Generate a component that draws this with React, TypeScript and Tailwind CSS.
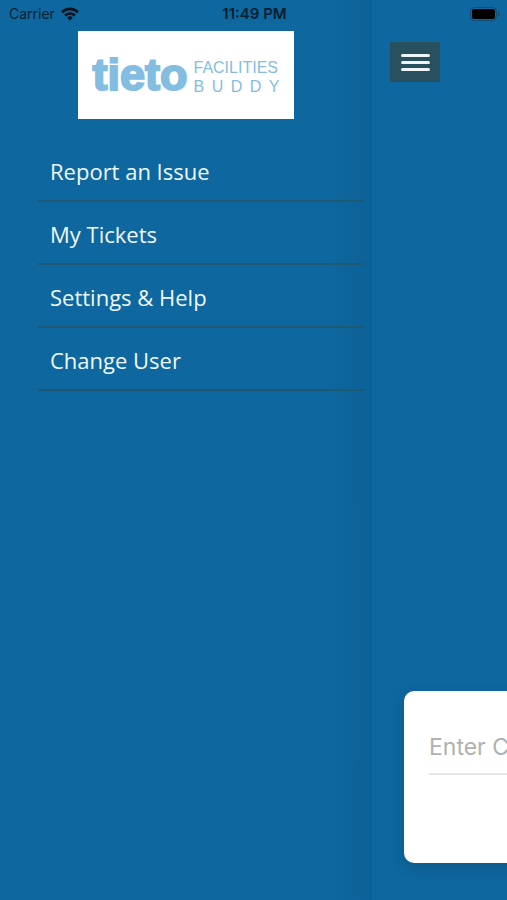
const menuItems = [
  { label: "Report an Issue", href: "#report" },
  { label: "My Tickets", href: "#tickets" },
  { label: "Settings & Help", href: "#settings" },
  { label: "Change User", href: "#user" },
];

const StatusBar = () => {
  return (
    <header className="absolute inset-x-0 top-0 grid h-7 grid-cols-3 items-center pr-[7px] pl-[9px] font-['Inter',sans-serif] text-[14px] leading-7 text-[#06202f]">
      <div className="flex items-center gap-1.5">
        <span>Carrier</span>
        <svg width="18" height="14" viewBox="0 0 18 14" fill="none" stroke="#04121b" strokeWidth="2.6">
          <path d="M1 5.2a11.4 11.4 0 0 1 16 0" />
          <path d="M4.1 8.5a7 7 0 0 1 9.8 0" />
          <path d="M9 13.5 6.2 10.7a4 4 0 0 1 5.6 0Z" fill="#04121b" stroke="none" />
        </svg>
      </div>
      <span className="text-center text-[15px] font-semibold">11:49 PM</span>
      <svg className="justify-self-end" width="30" height="14" viewBox="0 0 30 14">
        <rect x="0.5" y="0.5" width="26" height="13" rx="4" fill="none" stroke="#0a4d77" />
        <rect x="2" y="2" width="23" height="10" rx="2" fill="#000" />
        <path d="M28 4.8c2 .8 2 3.6 0 4.4Z" fill="#0a4d77" />
      </svg>
    </header>
  );
};

const Logo = () => {
  return (
    <div className="mx-auto flex h-[88px] w-[216px] items-center justify-center gap-1.5 bg-white font-['Liberation_Sans',sans-serif] text-[#84bde2]">
      <span className="text-[45px] leading-[44px] font-bold [-webkit-text-stroke:2px_#84bde2]">
        tieto
      </span>
      <div className="w-[86px] pt-1 text-[16px] leading-[19px]">
        <div>FACILITIES</div>
        <div className="flex justify-between">
          {"BUDDY".split("").map((letter, i) => (
            <span key={i}>{letter}</span>
          ))}
        </div>
      </div>
    </div>
  );
};

const Drawer = () => {
  return (
    <aside className="w-[372px] shrink-0 bg-linear-to-r from-[#0e679f] from-88% to-[#0d6297] pt-[31px]">
      <Logo />
      <nav className="mt-5 mr-2 ml-[38px]">
        <ul>
          {menuItems.map((item) => (
            <li key={item.label} className="border-b-2 border-[#1f5873]">
              <a
                href={item.href}
                className="block px-3 pt-[17px] pb-[13px] font-['Open_Sans',sans-serif] text-[22px] leading-[31px] text-[#eef8fe]"
              >
                {item.label}
              </a>
            </li>
          ))}
        </ul>
      </nav>
    </aside>
  );
};

const App = () => {
  return (
    <div className="relative flex min-h-screen overflow-hidden bg-[#0e679f]">
      <Drawer />
      {/* Main page, pushed to the right while the drawer is open */}
      <main className="flex w-screen shrink-0 flex-col justify-between pt-[42px] pb-[37px]">
        <button
          type="button"
          aria-label="Close menu"
          className="ml-[18px] flex h-10 w-[50px] flex-col items-center justify-center gap-1 bg-[#28505f]"
        >
          <span className="h-[3px] w-[29px] rounded-full bg-[#eef6fa]" />
          <span className="h-[3px] w-[29px] rounded-full bg-[#eef6fa]" />
          <span className="h-[3px] w-[29px] rounded-full bg-[#eef6fa]" />
        </button>
        <form className="mx-8 h-[172px] rounded-[10px] bg-white px-[25px] pt-[34px] shadow-[0_4px_16px_rgba(0,0,0,0.15)]">
          <input
            type="text"
            aria-label="Enter Code"
            placeholder="Enter Code"
            className="h-[50px] w-full border-b-2 border-[#e6e6e6] pb-1 font-['Inter',sans-serif] text-[23px] text-[#333] outline-none placeholder:text-[#b0b0b0]"
          />
        </form>
      </main>
      <StatusBar />
    </div>
  );
};

export default App;
